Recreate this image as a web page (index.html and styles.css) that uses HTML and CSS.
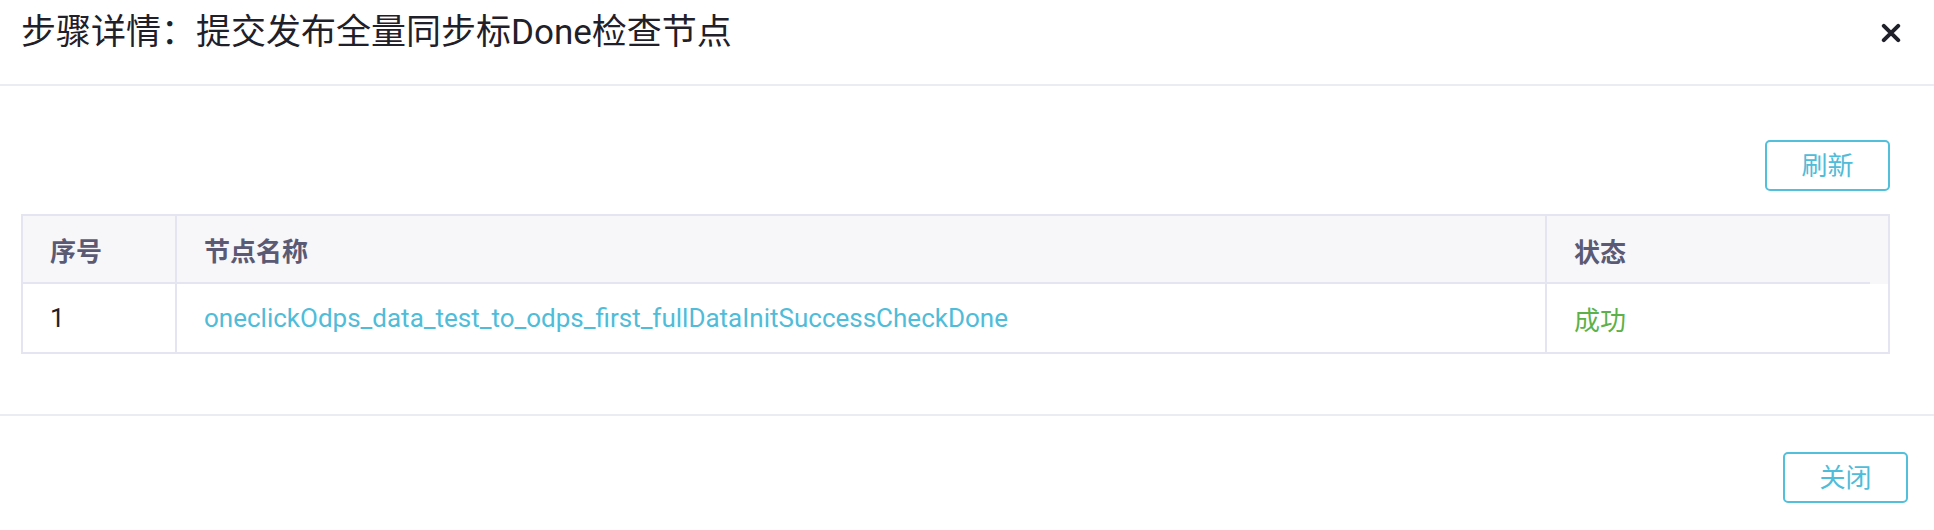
FILE: index.html
```html
<!DOCTYPE html>
<html lang="zh-CN">
<head>
<meta charset="utf-8">
<title>步骤详情</title>
<link rel="stylesheet" href="styles.css">
</head>
<body>
<div class="modal">
  <div class="modal-header">
    <div class="modal-title">步骤详情：提交发布全量同步标Done检查节点</div>
    <button class="close-x" aria-label="关闭">
      <svg width="20" height="20" viewBox="0 0 20 20"><path d="M2.8 2.8 L17.2 17.2 M17.2 2.8 L2.8 17.2" stroke="#1f2029" stroke-width="4" stroke-linecap="round" fill="none"/></svg>
    </button>
  </div>
  <div class="modal-body">
    <div class="toolbar">
      <button class="btn">刷新</button>
    </div>
    <table class="grid">
      <thead>
        <tr>
          <th class="col-idx">序号</th>
          <th class="col-name">节点名称</th>
          <th class="col-status">状态</th>
        </tr>
      </thead>
      <tbody>
        <tr>
          <td class="col-idx">1</td>
          <td class="col-name"><a class="node-link">oneclickOdps_data_test_to_odps_first_fullDataInitSuccessCheckDone</a></td>
          <td class="col-status"><span class="status-ok">成功</span></td>
        </tr>
      </tbody>
    </table>
  </div>
  <div class="modal-footer">
    <button class="btn">关闭</button>
  </div>
</div>
</body>
</html>
```

FILE: styles.css
```css
* { box-sizing: border-box; }
html, body { margin: 0; padding: 0; background: #ffffff; }
body {
  font-family: "Roboto", "Noto Sans CJK SC", sans-serif;
  color: #1f2029;
  width: 1934px;
  height: 530px;
  overflow: hidden;
}
.modal { width: 1934px; }

.modal-header {
  height: 86px;
  border-bottom: 2px solid #ebebf3;
  display: flex;
  justify-content: space-between;
  align-items: flex-start;
  padding: 12px 33px 0 21px;
}
.modal-title {
  font-size: 35px;
  line-height: 42px;
  font-weight: 400;
  color: #1f2029;
}
.close-x {
  margin-top: 23px;
  width: 20px;
  height: 20px;
  padding: 0;
  border: 0;
  background: none;
  display: block;
  margin-top: 11px;
}
.close-x svg { display: block; }

.modal-body {
  padding: 54px 44px 60px 21px;
}
.toolbar {
  display: flex;
  justify-content: flex-end;
  margin-bottom: 23px;
}
.btn {
  width: 125px;
  height: 51px;
  border: 2px solid #52bfdb;
  border-radius: 5px;
  background: #ffffff;
  color: #4fbcd9;
  font-family: "Roboto", "Noto Sans CJK SC", sans-serif;
  font-size: 26px;
  line-height: 1;
  padding: 0;
  display: flex;
  align-items: center;
  justify-content: center;
}

.grid {
  width: 100%;
  border-collapse: separate;
  border-spacing: 0;
  border: 2px solid #e4e5f0;
  font-size: 26px;
  table-layout: fixed;
}
.grid th, .grid td {
  padding: 0 26px 0 27px;
  text-align: left;
  white-space: nowrap;
}
.grid th + th, .grid td + td { border-left: 2px solid #e4e5f0; }
.grid th {
  height: 68px;
  background: #f7f7fa;
  color: #5a5a75;
  font-weight: 700;
  border-bottom: 2px solid #e4e5f0;
}
.grid th.col-status {
  border-bottom: 0;
  background:
    linear-gradient(#e4e5f0, #e4e5f0) no-repeat left bottom / calc(100% - 18px) 2px,
    #f7f7fa;
}
.grid td {
  height: 68px;
  color: #1f2029;
}
.col-idx { width: 152px; }
.col-status { width: 343px; }
.node-link { color: #4fbcd9; text-decoration: none; }
.status-ok { color: #5cb148; }

.modal-footer {
  border-top: 2px solid #ebebf3;
  display: flex;
  justify-content: flex-end;
  padding: 36px 26px 0 0;
}
```
